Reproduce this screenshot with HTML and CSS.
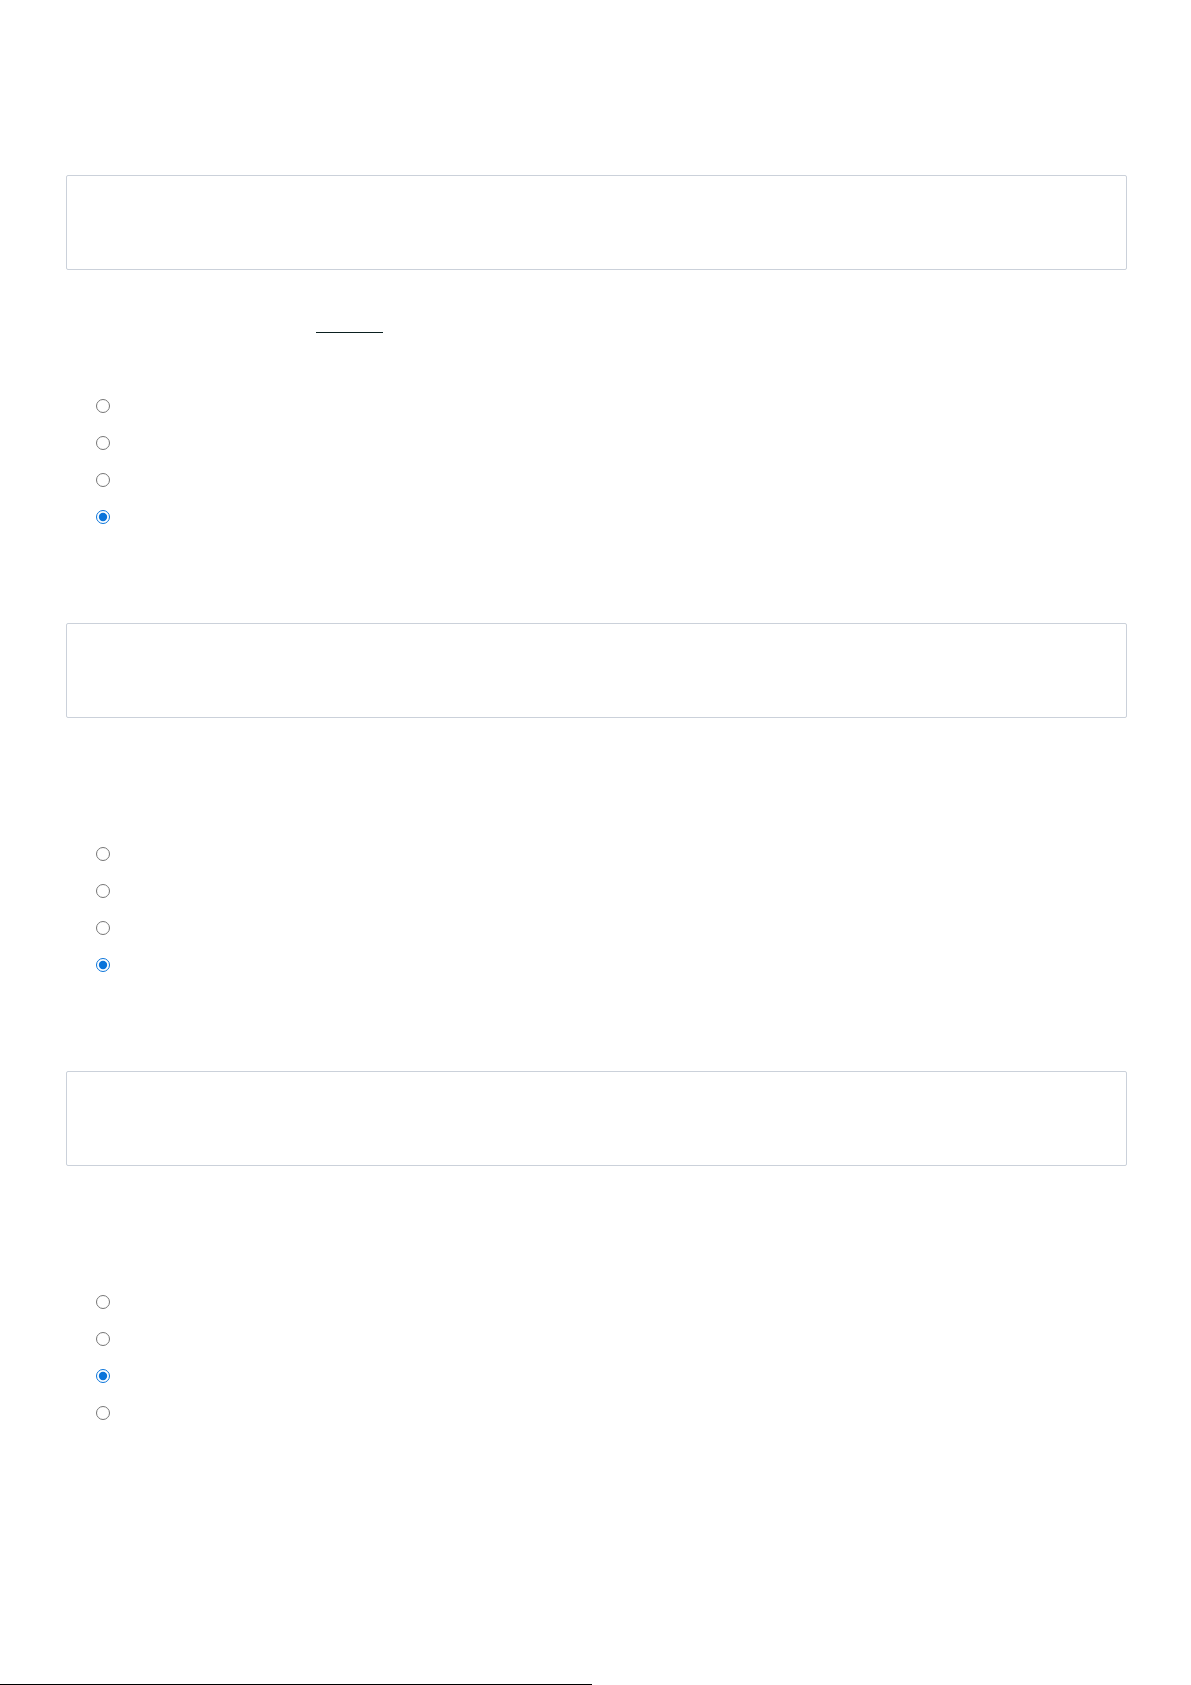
FILE: index.html
```html
<!DOCTYPE html>
<html lang="en">
<head>
  <meta charset="UTF-8">
  <meta name="viewport" content="width=device-width, initial-scale=1.0">
  <title>Quiz</title>
  <link rel="stylesheet" href="styles.css">
</head>
<body>

  <main class="quiz">

    <!-- 질문 1 -->
    <section class="question">
      <div class="answer-box"></div>
      <div class="prompt"><span class="blank"></span></div>
      <div class="options">
        <label class="option"><input type="radio" name="q1"></label>
        <label class="option"><input type="radio" name="q1"></label>
        <label class="option"><input type="radio" name="q1"></label>
        <label class="option"><input type="radio" name="q1" checked></label>
      </div>
    </section>

    <!-- 질문 2 -->
    <section class="question">
      <div class="answer-box"></div>
      <div class="prompt"></div>
      <div class="options">
        <label class="option"><input type="radio" name="q2"></label>
        <label class="option"><input type="radio" name="q2"></label>
        <label class="option"><input type="radio" name="q2"></label>
        <label class="option"><input type="radio" name="q2" checked></label>
      </div>
    </section>

    <!-- 질문 3 -->
    <section class="question">
      <div class="answer-box"></div>
      <div class="prompt"></div>
      <div class="options">
        <label class="option"><input type="radio" name="q3"></label>
        <label class="option"><input type="radio" name="q3"></label>
        <label class="option"><input type="radio" name="q3" checked></label>
        <label class="option"><input type="radio" name="q3"></label>
      </div>
    </section>

  </main>

  <div class="bottom-line"></div>

</body>
</html>
```

FILE: styles.css
```css
/* 전역 스타일 */
body {
  font-family: "Liberation Sans", Arial, sans-serif;
  margin: 0;
  padding: 175px 0 0;
  background-color: #fff;
  color: #212529;
}

.quiz {
  margin-left: 66px;
  width: 1061px;
}

.question {
  margin-bottom: 88px;
}

.answer-box {
  height: 95px;
  box-sizing: border-box;
  border: 1px solid #cbd1da;
  border-radius: 2px;
}

/* 빈칸 밑줄 */
.prompt {
  height: 117px;
  box-sizing: border-box;
  padding-top: 62px;
}

.blank {
  display: block;
  width: 67px;
  margin-left: 250px;
  border-top: 1px solid #0b2020;
}

.options {
  display: flex;
  flex-direction: column;
}

.option {
  display: flex;
  align-items: center;
  height: 37px;
  padding-left: 30px;
}

.option input {
  margin: 0;
  width: 14px;
  height: 14px;
  accent-color: #0a74da;
}

/* 하단 선 */
.bottom-line {
  margin-top: 253px;
  width: 592px;
  height: 1px;
  background-color: #000;
}
```
